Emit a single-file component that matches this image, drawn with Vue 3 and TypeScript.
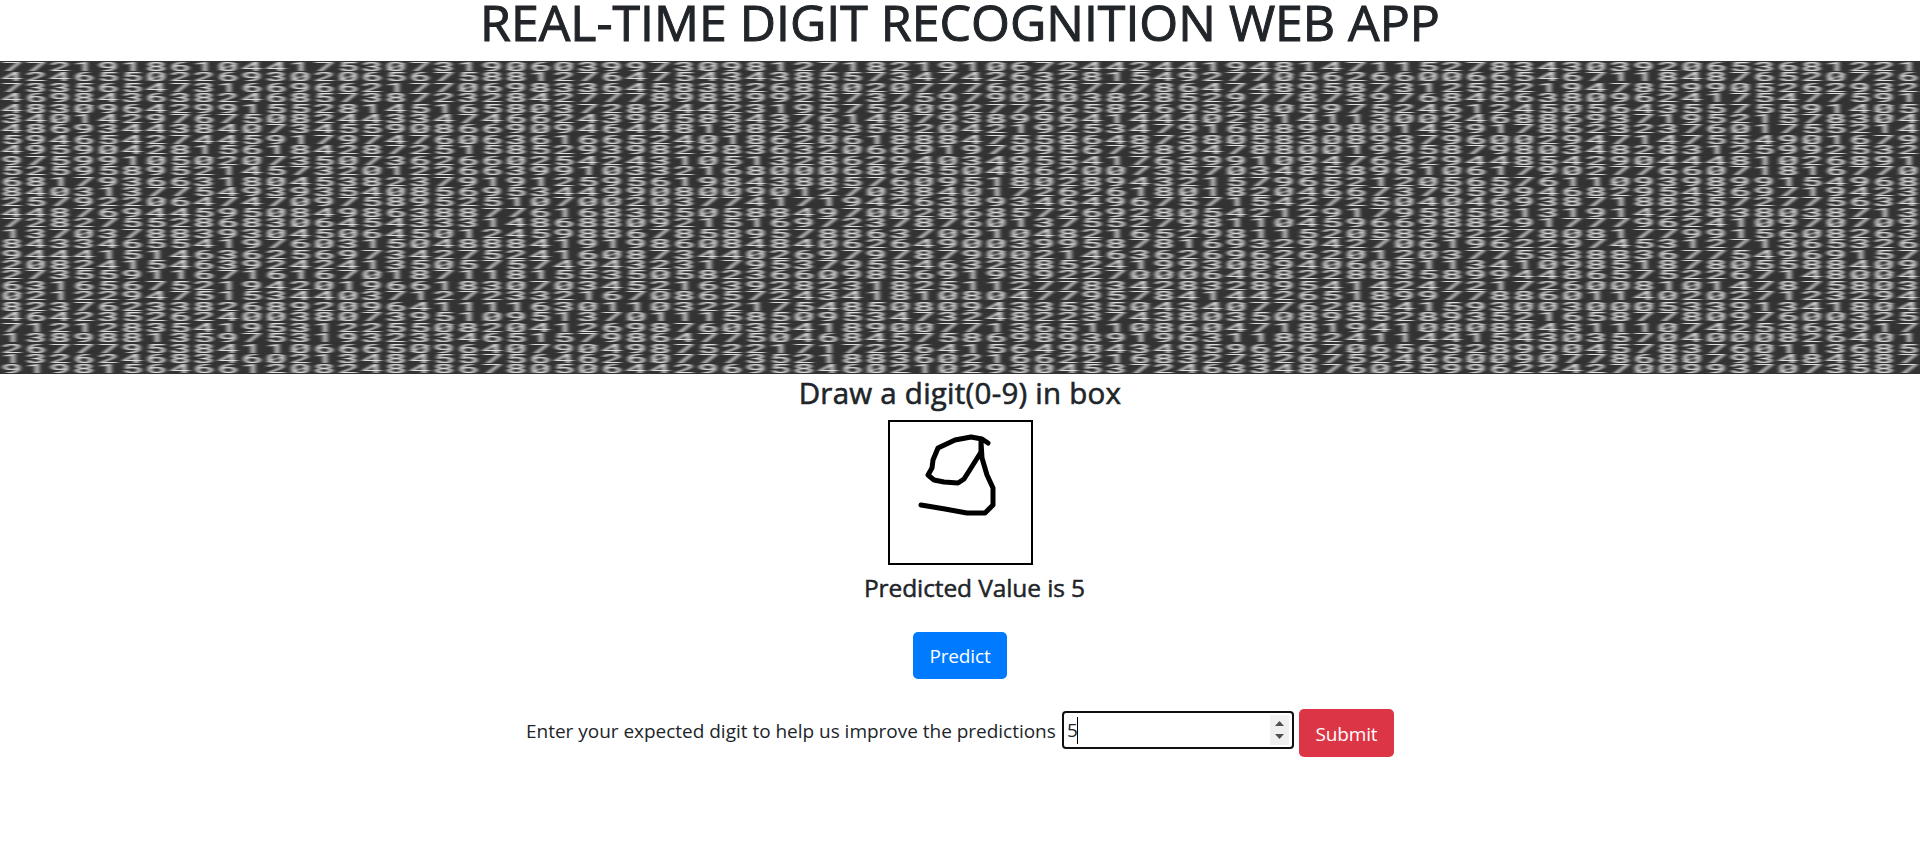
<script setup lang="ts">
interface Cell { x: number; y: number }

const COL = 24
const ROW = 10.43

const panels: string[][] = [
  [
    '77219186104417530731', '42465502269302065675', '73356547316696621770', '46984363824685738723',
    '48309642991552814516', '34014297675082443347', '48693443840734559086', '59465427445917974760',
    '49590428156184287251', '97599105020735073626', '52595895214573201226', '68179366318045382379',
    '84031377549393540856', '25792206474709758952', '44876944595084986388', '72827552868306454333',
    '13703788393045064501', '84334655419760315048', '94441514636256973427', '20824154639242413505',
    '27355911671616701871', '63165675219420196618', '02122947515344037127', '82376233826892096411',
    '46423526240038073951', '71212835419531225508', '13898813597531932334', '26777953841106665096',
    '13262468346021348455', '91981564661208248486',
  ],
  [
    '90603997309812718219', '88127647543438557347', '69833645838268302077', '28427778983992573759',
    '58037282442319575209', '46624398583437614879', '69094644813823535320', '63616652401862061888',
    '58529398298363206691', '60254243105132862940', '63991033216800068635', '19125956198438857609',
    '95344990800901270384', '51070020377417194263', '77616835505884970028', '14868809215169723787',
    '24598867858957886370', '88419198608484062649', '52416087344026979787', '75749432317953795546',
    '18155350582366098569', '30703452163928231825', '23321670865724341810', '11630110322175485080',
    '09513701115850953473', '20412698760354189007', '65157986477504684575', '40790498752217172264',
    '75646260777352188360', '78050644296958460210',
  ],
  [
    '10672442441948147115', '42632815492770562660', '76633777864748958731', '79040382852977873976',
    '27726582693230597524', '38996414440251411300', '42192534791688998014', '47558648738058308937',
    '97995673894788001995', '34955417639910947632', '04862007357034858961', '51802894321579652120',
    '01726261801820466737', '89346496757154272504', '68572692805421291795', '60137552798110459669',
    '91048216529811520583', '00399587816932942706', '90021463626962620120', '32385241993089406051',
    '19392270006468228835', '11277834283289541424', '80477957841442651899', '94335350434077628341',
    '24822374380350893528', '71365110860471819410', '86989391963118824114', '15649043495962670656',
    '21662216832732675246', '29304537246334876025',
  ],
  [
    '27834303920653681221', '06654671184876520726', '25521947859905262932', '84663809624175477591',
    '61245056435575591405', '24688693719521578304', '39178623237601755214', '96002947147554901679',
    '87980348283125992532', '94485429044481026891', '06179027766071816770', '56576110939899154968',
    '95994682954369719423', '04693871883572775634', '85813191422838038713', '88291777962410970709',
    '32278081779915608263', '19622974531271365326', '37753388367754969157', '13410985187805588409',
    '89944865752267148004', '72172600810147875803', '77886011402027123294', '59300300053391341804',
    '93521658778097600325', '80884311107425363917', '41543035704000826401', '32899045783760113685',
    '60090778680793484387', '99622427009937073587',
  ],
]

const rows: string[] = panels[0].map((_, r) => panels.map((p) => p[r]).join(''))

const columnXs: string = Array.from({ length: 80 }, (_, i) => 4 + i * 8).join(' ')

const zeros: Cell[] = rows.flatMap((line, r) =>
  [...line].flatMap((ch, c) => (ch === '0' ? [{ x: c * COL + 12, y: r * ROW + 5.8 }] : [])),
)

const slashes: string = zeros.map((z) => `M${z.x - 9} ${(z.y + 3.2).toFixed(2)}l18 -6.4`).join('')
</script>

<template>
  <main class="page">
    <h1 class="title"><span>REAL-TIME DIGIT RECOGNITION WEB APP</span></h1>

    <svg class="banner" viewBox="0 0 1920 313" preserveAspectRatio="none" aria-hidden="true">
      <defs>
        <filter id="stretch" x="0" y="0" width="100%" height="100%" color-interpolation-filters="sRGB">
          <feGaussianBlur stdDeviation="2 0.38" />
        </filter>
      </defs>
      <rect width="1920" height="313" fill="#333" />
      <g filter="url(#stretch)">
        <rect x="-10" y="-10" width="1940" height="333" fill="#333" />
        <g transform="scale(3 1)" class="digits">
          <text v-for="(line, r) in rows" :key="r" :x="columnXs" :y="r * ROW + 9.9">{{ line }}</text>
        </g>
        <path :d="slashes" stroke="#e0e0e0" stroke-width="1" fill="none" />
      </g>
    </svg>

    <h2 class="prompt"><span>Draw a digit(0-9) in box</span></h2>

    <svg class="board" viewBox="0 0 141 141">
      <path
        d="M98 21 L92 17 L81 15 L65 18 L48 26 L43 38 L42 46 L38 53 L44 58 L54 60 L68 61 L74 57 L81 46 L91 30 L91 20 L92 36 L97 53 L103 66 L103 83 L95 91 L77 91 L55 87 L31 83"
      />
    </svg>

    <h3 class="result"><span>Predicted Value is 5</span></h3>

    <button class="btn predict" type="button"><span>Predict</span></button>

    <form class="feedback" @submit.prevent>
      <label class="hint">Enter your expected digit to help us improve the predictions</label>
      <div class="field">
        <span class="value">5</span>
        <span class="caret"></span>
        <svg class="spinner" viewBox="0 0 19 30">
          <path d="M5 11 L9.5 6 L14 11 Z M5 19 L9.5 24 L14 19 Z" />
        </svg>
      </div>
      <button class="btn submit" type="submit"><span>Submit</span></button>
    </form>
  </main>
</template>

<style>
body {
  background: #fff;
}
</style>

<style scoped>
.page {
  display: flex;
  flex-direction: column;
  align-items: center;
  height: 848px;
  overflow: hidden;
  color: #212529;
  font-family: 'Open Sans', 'Noto Sans', sans-serif;
  font-size: 19px;
  white-space: nowrap;
}
h1, h2, h3 {
  margin: 0;
  font-weight: 500;
}
.title {
  height: 61px;
  font-size: 50px;
  line-height: 45px;
  -webkit-text-stroke: 1px #212529;
}
.banner {
  display: block;
  flex: none;
  width: 1920px;
  height: 313px;
}
.digits {
  font-family: Roboto, sans-serif;
  font-size: 12px;
  text-anchor: middle;
  fill: #e0e0e0;
  stroke: #e0e0e0;
  stroke-width: 0.2px;
}
.prompt {
  height: 46px;
  font-size: 29.5px;
  letter-spacing: 0.25px;
  line-height: 38px;
  -webkit-text-stroke: 0.6px #212529;
}
.board {
  box-sizing: border-box;
  flex: none;
  width: 145px;
  height: 145px;
  border: 2px solid #000;
}
.board path {
  fill: none;
  stroke: #000;
  stroke-width: 5;
  stroke-linecap: round;
  stroke-linejoin: round;
}
.result {
  height: 67px;
  margin-left: 29px;
  font-size: 24.5px;
  letter-spacing: -0.1px;
  line-height: 45px;
  -webkit-text-stroke: 0.5px #212529;
}
.btn {
  box-sizing: border-box;
  flex: none;
  padding: 0;
  border: 0;
  border-radius: 5px;
  color: #fff;
  font: inherit;
  letter-spacing: -0.15px;
  text-align: center;
}
.predict {
  width: 94px;
  height: 47px;
  background: #007bff;
}
.feedback {
  display: flex;
  align-items: flex-start;
  width: 868px;
  margin-top: 30px;
}
.hint {
  width: 536px;
  letter-spacing: -0.02px;
  line-height: 44px;
}
.field {
  box-sizing: border-box;
  display: flex;
  align-items: center;
  width: 232px;
  height: 38px;
  margin: 2px 5px 0 0;
  padding: 0 3px;
  border: 2px solid #101010;
  border-radius: 4px;
}
.value {
  width: 10px;
}
.caret {
  width: 1px;
  height: 27px;
  background: #000;
}
.spinner {
  width: 19px;
  height: 30px;
  margin-left: auto;
  background: #f0f0f0;
}
.spinner path {
  fill: #505050;
}
.submit {
  width: 95px;
  height: 48px;
  padding-top: 2px;
  background: #dc3545;
}
</style>
